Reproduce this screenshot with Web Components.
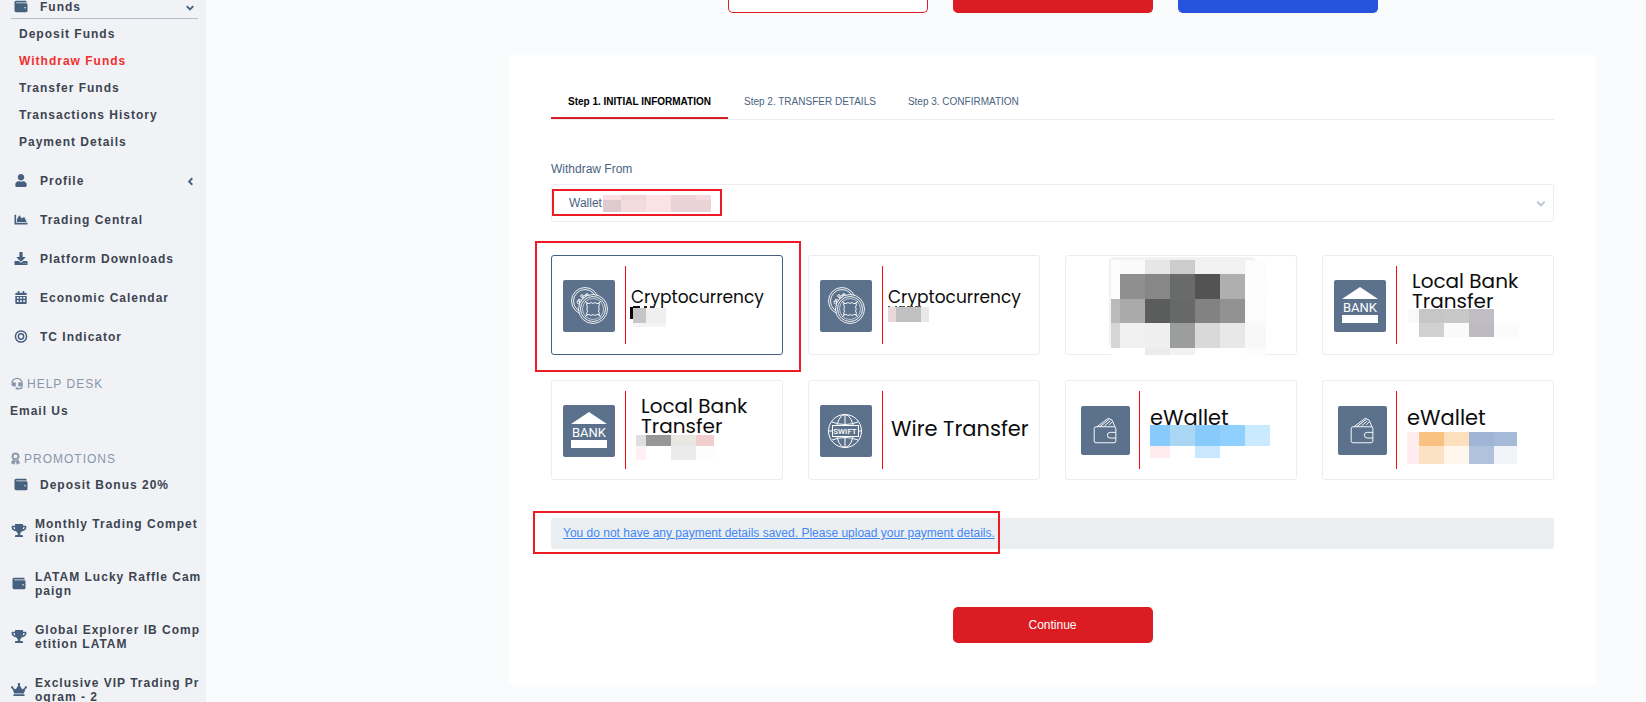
<!DOCTYPE html>
<html lang="en">
<head>
<meta charset="utf-8">
<title>Withdraw Funds</title>
<style>
  body { margin: 0; background: #fafbfd; font-family: "Liberation Sans", Arial, sans-serif; font-size: 12px; line-height: 14px; color: #4a6280; }
</style>
</head>
<body>
<portal-app></portal-app>
<script>
const ICONS = {
  wallet: ['0 0 512 512', '<path d="M461.2 128H80c-8.84 0-16-7.16-16-16s7.16-16 16-16h384c8.84 0 16-7.16 16-16 0-26.51-21.49-48-48-48H64C28.65 32 0 60.65 0 96v320c0 35.35 28.65 64 64 64h397.2c28.02 0 50.8-21.53 50.8-48V176c0-26.47-22.78-48-50.8-48zM416 336c-17.67 0-32-14.33-32-32s14.33-32 32-32 32 14.33 32 32-14.33 32-32 32z"/>'],
  user: ['0 0 448 512', '<path d="M224 256c70.7 0 128-57.3 128-128S294.7 0 224 0 96 57.3 96 128s57.3 128 128 128zm89.6 32h-16.7c-22.2 10.2-46.9 16-72.9 16s-50.6-5.8-72.9-16h-16.7C60.2 288 0 348.2 0 422.4V464c0 26.5 21.5 48 48 48h352c26.5 0 48-21.5 48-48v-41.6c0-74.2-60.2-134.4-134.4-134.4z"/>'],
  chart: ['0 0 512 512', '<path d="M500 384c6.6 0 12 5.4 12 12v40c0 6.6-5.4 12-12 12H12c-6.6 0-12-5.4-12-12V76c0-6.6 5.4-12 12-12h40c6.6 0 12 5.4 12 12v308h436zM372.7 159.5L288 216l-85.3-113.7c-5.1-6.8-15.5-6.3-19.9 1L96 248v104h384l-89.9-187.8c-3.2-6.5-11.4-8.7-17.4-4.7z"/>'],
  download: ['0 0 512 512', '<path d="M216 0h80c13.3 0 24 10.7 24 24v168h87.7c17.8 0 26.7 21.5 14.1 34.1L269.7 378.3c-7.5 7.5-19.8 7.5-27.3 0L90.1 226.1c-12.6-12.6-3.7-34.1 14.1-34.1H192V24c0-13.3 10.7-24 24-24zm296 376v112c0 13.3-10.7 24-24 24H24c-13.3 0-24-10.7-24-24V376c0-13.3 10.7-24 24-24h146.7l49 49c20.1 20.1 52.5 20.1 72.6 0l49-49H488c13.3 0 24 10.7 24 24zm-124 88c0-11-9-20-20-20s-20 9-20 20 9 20 20 20 20-9 20-20zm64 0c0-11-9-20-20-20s-20 9-20 20 9 20 20 20 20-9 20-20z"/>'],
  calendar: ['0 0 448 512', '<path fill-rule="evenodd" d="M48 64h48V12q0-12 12-12h40q12 0 12 12v52h128V12q0-12 12-12h40q12 0 12 12v52h48q48 0 48 48v36q0 12-12 12H12q-12 0-12-12v-36q0-48 48-48zM0 192h448v272q0 48-48 48H48q-48 0-48-48zM64 240v64h72v-64zM188 240v64h72v-64zM312 240v64h72v-64zM64 368v64h72v-64zM188 368v64h72v-64zM312 368v64h72v-64z"/>'],
  target: ['0 0 512 512', '<g fill="none" stroke="currentColor" stroke-width="58"><circle cx="256" cy="256" r="219"/><circle cx="256" cy="256" r="104"/></g>'],
  headset: ['0 0 512 512', '<path d="M56 250a200 200 0 0 1 400 0v120q0 84-84 84H270" fill="none" stroke="currentColor" stroke-width="50"/><path d="M144 208h36q28 0 28 28v108q0 28-28 28h-36C70 372 40 330 40 290s30-82 104-82zM368 208h-36q-28 0-28 28v108q0 28 28 28h36c74 0 104-42 104-82s-30-82-104-82zM230 416h64q32 0 32 40t-32 40h-64q-32 0-32-40t32-40z"/>'],
  award: ['0 0 384 512', '<circle cx="192" cy="172" r="122" fill="none" stroke="currentColor" stroke-width="70" stroke-dasharray="72 8"/><circle cx="192" cy="172" r="112" fill="none" stroke="currentColor" stroke-width="50"/><path d="M78 300 10 460l78-6 52 58 60-150 50 150 50-58 76 6-68-160-60 36H140z"/>'],
  trophy: ['0 0 576 512', '<path d="M552 64H448V24c0-13.3-10.7-24-24-24H152c-13.3 0-24 10.7-24 24v40H24C10.7 64 0 74.7 0 88v56c0 35.7 22.5 72.4 61.9 100.7 31.5 22.7 69.8 37.1 110 41.7C203.3 338.5 240 360 240 360v72h-48c-35.3 0-64 20.7-64 56v12c0 6.6 5.4 12 12 12h296c6.6 0 12-5.4 12-12v-12c0-35.3-28.7-56-64-56h-48v-72s36.7-21.5 68.1-73.6c40.3-4.6 78.6-19 110-41.7 39.3-28.3 61.9-65 61.9-100.7V88c0-13.3-10.7-24-24-24zM99.3 192.8C74.9 175.2 64 155.6 64 144v-16h64.2c1 32.6 5.8 61.2 12.8 86.2-15.1-5.2-29.2-12.4-41.7-21.4zM512 144c0 16.1-17.7 36.1-35.3 48.8-12.5 9-26.7 16.2-41.8 21.4 7-25 11.8-53.6 12.8-86.2H512v16z"/>'],
  crown: ['0 0 640 512', '<path d="M528 448H112c-8.8 0-16 7.2-16 16v32c0 8.8 7.2 16 16 16h416c8.8 0 16-7.2 16-16v-32c0-8.8-7.2-16-16-16zm64-320c-26.5 0-48 21.5-48 48 0 7.1 1.6 13.7 4.4 19.8L476 239.2c-15.4 9.2-35.3 4-44.2-11.6L350.3 85C361 76.2 368 63 368 48c0-26.5-21.5-48-48-48s-48 21.5-48 48c0 15 7 28.2 17.7 37l-81.5 142.6c-8.9 15.6-28.9 20.8-44.2 11.6l-72.3-43.4c2.7-6 4.4-12.7 4.4-19.8 0-26.5-21.5-48-48-48S0 149.5 0 176s21.5 48 48 48c2.6 0 5.2-.4 7.7-.8L128 416h384l72.3-192.8c2.5.4 5.1.8 7.7.8 26.5 0 48-21.5 48-48s-21.5-48-48-48z"/>'],
  caret: ['0 0 14 14', '<path d="M3 5l4 4 4-4" fill="none" stroke="currentColor" stroke-width="2"/>'],
  down: ['0 0 14 14', '<path d="M3.5 5.5 7 9l3.500-3.500" fill="none" stroke="currentColor" stroke-width="2"/>'],
  left: ['0 0 14 14', '<path d="M9.500 3.500 6 7l3.500 3.500" fill="none" stroke="currentColor" stroke-width="2"/>']
};

const TILES = {
  crypto: `<g fill="none" stroke="#fff" stroke-width=".9">
    <circle cx="22" cy="21" r="13.500"/><circle cx="22" cy="21" r="11.500"/>
    <path d="M14 22l2-3 3 2 1-4 4 1M17 25l-1-5M21 16l3-2M20 19l5-4"/><circle cx="15.500" cy="22.500" r="1.300"/><circle cx="19" cy="16" r="1.300"/><circle cx="24" cy="15" r="1.300"/>
    <circle cx="30" cy="29" r="14.500" fill="#5c728c"/><circle cx="30" cy="29" r="12.500"/><circle cx="30" cy="29" r="10.500" stroke-width=".6"/>
    <path d="M24 23q2 1.500 4-.5 2 2 4 0 2 2 4 .5 1 2-.5 4 1.500 2 0 4 1.500 2 .5 4-2-1.500-4 .5-2-2-4 0-2-2-4-.5-1-2 .5-4-1.500-2 0-4-1.500-2-.5-4z"/><path d="M22 21l3 3M38 21l-3 3M22 37l3-3M38 37l-3-3"/></g>`,
  bank: `<path d="M8 19 26 7l18 12zM8 35h36v8H8z" fill="#fff"/><text x="26" y="32" text-anchor="middle" font-family="Roboto, sans-serif" font-size="13" fill="#fff">BANK</text>`,
  swift: `<g fill="none" stroke="#fff" stroke-width="1"><circle cx="25" cy="26" r="16.500"/><ellipse cx="25" cy="26" rx="8.500" ry="16.500"/><path d="M25 9.500v33M8.500 26h33M12 17q13 5 26 0M12 35q13-5 26 0"/><rect x="12.500" y="20.500" width="26" height="11" fill="#5c728c"/></g><text x="25" y="29" text-anchor="middle" font-family="Roboto, sans-serif" font-size="8" font-weight="500" fill="#fff">SWIFT</text>`,
  wallet: `<g fill="none" stroke="#fff" stroke-width="1"><path d="M16 22h19q2 0 2 2v4h-6q-3 0-3 3t3 3h6v3q0 2-2 2H16q-2 0-2-2V24q0-2 2-2zM37 28v6M17 22l12-9 4 2 3 7M20 22l10-8M25 21l6-5M30 20l3-3"/></g>`
};

function define(name, html, setup) {
  const template = document.createElement('template');
  template.innerHTML = html;
  customElements.define(name, class extends HTMLElement {
    connectedCallback() {
      if (this.shadowRoot) return;
      this.attachShadow({ mode: 'open' }).append(template.content.cloneNode(true));
      if (setup) setup(this, this.shadowRoot);
    }
  });
}

define('ui-icon', `<style>:host{display:flex;align-items:center;justify-content:center;flex:none;width:16px;height:14px}svg{display:block;height:13px;width:100%;fill:currentColor}</style><svg aria-hidden="true"></svg>`, (el, root) => {
  const [box, body] = ICONS[el.getAttribute('name')];
  const svg = root.querySelector('svg');
  svg.setAttribute('viewBox', box);
  svg.innerHTML = body;
});

/* Pixelated cover over private details; cells are "x y width height colour". */
define('privacy-mask', `<style>:host{display:block;position:absolute;inset:-1px;pointer-events:none}svg{display:block;overflow:visible}</style><svg width="232" height="100" shape-rendering="crispEdges" aria-hidden="true"></svg>`, (el, root) => {
  root.querySelector('svg').innerHTML = el.getAttribute('cells').split(',').map(cell => {
    const [x, y, w, h, c] = cell.trim().split(' ');
    return `<rect x="${x}" y="${y}" width="${w}" height="${h}" fill="#${c}"/>`;
  }).join('');
});

define('focus-frame', `<style>:host{display:block;position:absolute;box-sizing:border-box;border:2px solid #ed1c24;pointer-events:none;z-index:2}</style>`);

define('nav-item', `<style>
  :host{display:block}
  a{display:flex;align-items:center;color:#3c4450;font-weight:bold;letter-spacing:1px;text-decoration:none;white-space:nowrap;padding:0 8px 0 13px}
  ui-icon{color:#46607f;margin:-2px 11px 0 0}
  .more{margin:0 0 0 auto}
  :host([wide]) a{padding-left:11px}
  :host([wide]) ui-icon{margin-right:8px}
</style><a href="#"><slot></slot></a>`, (el, root) => {
  const a = root.querySelector('a');
  a.insertAdjacentHTML('afterbegin', `<ui-icon name="${el.getAttribute('icon')}"></ui-icon>`);
  if (el.hasAttribute('more')) a.insertAdjacentHTML('beforeend', `<ui-icon class="more" name="${el.getAttribute('more')}"></ui-icon>`);
});

define('nav-heading', `<style>:host{display:flex;align-items:center;gap:2px;color:#8896a9;letter-spacing:1px;padding-left:9px}ui-icon{margin-top:-1px}ui-icon[name=award]{width:13px}</style><slot></slot>`, (el, root) => {
  root.querySelector('slot').insertAdjacentHTML('beforebegin', `<ui-icon name="${el.getAttribute('icon')}"></ui-icon>`);
});

define('side-nav', `<style>
  :host{display:block;box-sizing:border-box;width:206px;height:100vh;overflow:hidden;background:#f0f2f6}
  .group{display:flex;flex-direction:column;gap:25px}
  .open{border-bottom:1px solid #b3bfce;margin:0 8px 0 11px;padding-bottom:4px}
  .open nav-item{margin:0 -8px 0 -11px}
  .sub{display:flex;flex-direction:column;gap:13px;padding:8px 19px 25px}
  .sub a,.mail{color:#3c4450;font-weight:bold;letter-spacing:1px;text-decoration:none}
  .sub a[aria-current]{color:#f0302c}
  .help{margin-top:33px}
  .mail{display:block;margin:13px 10px 34px}
  .promo{margin-bottom:12px}
</style>
<nav>
  <div class="open"><nav-item icon="wallet" more="down">Funds</nav-item></div>
  <div class="sub"><a href="#">Deposit Funds</a><a href="#" aria-current="page">Withdraw Funds</a><a href="#">Transfer Funds</a><a href="#">Transactions History</a><a href="#">Payment Details</a></div>
  <div class="group">
    <nav-item icon="user" more="left">Profile</nav-item>
    <nav-item icon="chart">Trading Central</nav-item>
    <nav-item icon="download">Platform Downloads</nav-item>
    <nav-item icon="calendar">Economic Calendar</nav-item>
    <nav-item icon="target">TC Indicator</nav-item>
  </div>
  <nav-heading class="help" icon="headset">HELP DESK</nav-heading>
  <a class="mail" href="#">Email Us</a>
  <nav-heading class="promo" icon="award">PROMOTIONS</nav-heading>
  <div class="group">
    <nav-item icon="wallet">Deposit Bonus 20%</nav-item>
    <nav-item wide icon="trophy"><span>Monthly Trading Compet<br>ition</span></nav-item>
    <nav-item wide icon="wallet"><span>LATAM Lucky Raffle Cam<br>paign</span></nav-item>
    <nav-item wide icon="trophy"><span>Global Explorer IB Comp<br>etition LATAM</span></nav-item>
    <nav-item wide icon="crown"><span>Exclusive VIP Trading Pr<br>ogram - 2</span></nav-item>
  </div>
</nav>`);

define('top-actions', `<style>
  :host{display:flex;justify-content:center;gap:25px}
  button{box-sizing:border-box;width:200px;height:13px;padding:0;border:1px solid #db1c22;border-top:0;border-radius:0 0 5px 5px;background:#db1c22}
  .outline{background:#fff}
  .blue{background:#2754df;border-color:#2754df}
</style><button class="outline" aria-label="First action"></button><button aria-label="Second action"></button><button class="blue" aria-label="Third action"></button>`);

define('step-tabs', `<style>
  :host{display:flex;font-size:10px;line-height:10px;border-bottom:1px solid #e9edf1}
  a{padding:0 17px 10px;border-bottom:2px solid transparent;color:#4a6280;text-decoration:none;white-space:nowrap}
  a + a{padding:0 16px 10px}
  a[aria-current]{color:#000;font-weight:bold;border-color:#db1c22}
</style><a href="#" aria-current="step">Step 1. INITIAL INFORMATION</a><a href="#">Step 2. TRANSFER DETAILS</a><a href="#">Step 3. CONFIRMATION</a>`);

define('wallet-select', `<style>
  :host{display:block}
  label{display:block;margin-bottom:8px}
  .box{position:relative;color:#b9c4d2}
  select{appearance:none;display:block;box-sizing:border-box;width:100%;height:38px;padding:0 40px 0 17px;border:1px solid #e9edf4;border-radius:3px;background:#fff;font:inherit;color:#4a6280}
  ui-icon{position:absolute;right:5px;top:12px}
  focus-frame{left:1px;top:5px;width:170px;height:27px}
</style>
<label for="source">Withdraw From</label>
<div class="box"><select id="source"><option>Wallet</option></select><ui-icon name="caret"></ui-icon>
<privacy-mask cells="53 12 18 5 fbdfe1,71 12 25 5 eed6da,96 12 25 5 fbe2e3,121 12 25 5 ecd4d8,146 12 15 5 f6dadf,53 17 18 12 dfcbcf,71 17 25 12 f3dbde,96 17 25 12 fbe2e3,121 17 40 12 e9d3d7"></privacy-mask>
<focus-frame></focus-frame></div>`);

define('pay-method', `<style>
  :host{display:block;position:relative;box-sizing:border-box;height:100px;border:1px solid #e9edf4;border-radius:3px;background:#fff;--text:20px;--top:15px;--left:15px}
  :host([checked]){border-color:#46607f}
  label{display:flex;align-items:center;height:100%;padding-left:11px;box-sizing:border-box;cursor:pointer}
  input{position:absolute;opacity:0;margin:0;inset:0;width:100%;height:100%}
  .tile{flex:none;width:52px;height:52px;border-radius:2px;background:#5c728c;margin-top:2px}
  .rule{flex:none;width:1px;height:78px;background:#f8090f;margin-left:10px}
  .name{align-self:flex-start;padding:var(--top) 0 0 var(--left);font:var(--text)/20px Poppins,Inter,sans-serif;color:#0c0c0c;white-space:nowrap}
  :host([kind=crypto]){--text:17px;--top:31px;--left:5px}
  :host([kind=swift]){--text:21px;--top:38px;--left:8px}
  :host([kind=wallet]){--text:21px;--top:27px;--left:10px}
  :host([kind=wallet]) .tile{width:49px;height:49px;margin:0 0 0 4px}
  :host([kind=wallet]) .rule{margin-left:9px}
  :host([kind=hidden]) .tile,:host([kind=hidden]) .rule{display:none}
</style>
<label><input type="radio"><svg class="tile" viewBox="0 0 52 52" aria-hidden="true"></svg><span class="rule"></span><span class="name"><slot></slot></span></label><slot name="over"></slot>`, (el, root) => {
  const kind = el.getAttribute('kind');
  root.querySelector('svg').innerHTML = TILES[kind] || '';
  const input = root.querySelector('input');
  input.checked = el.hasAttribute('checked');
  if (kind === 'hidden') input.setAttribute('aria-label', 'Payment method');
  input.addEventListener('change', () => {
    for (const other of el.getRootNode().querySelectorAll('pay-method')) {
      other.toggleAttribute('checked', other === el);
      other.shadowRoot.querySelector('input').checked = other === el;
    }
  });
});

define('method-grid', `<style>
  :host{display:grid;grid-template-columns:repeat(4,1fr);gap:25px}
  focus-frame{left:-17px;top:-15px;width:266px;height:131px}
</style>
<pay-method kind="crypto" checked>Cryptocurrency<privacy-mask slot="over" cells="79 52 3 12 050505,82 51 7 2 111111,93 51 3 2 222222,99 51 3 2 333333,82 53 13 15 c6c6c6,95 53 20 15 efefef,82 68 33 4 f4f4f4"></privacy-mask><focus-frame slot="over"></focus-frame></pay-method>
<pay-method kind="crypto">Cryptocurrency<privacy-mask slot="over" cells="80 51 2 1 555555,87 51 2 1 555555,91 51 6 1 555555,99 51 6 1 555555,107 51 6 1 555555,80 52 8 15 ead7dc,88 52 25 15 c0c0c0,113 52 8 15 e8e8e8"></privacy-mask></pay-method>
<pay-method kind="hidden"><privacy-mask slot="over" cells="48 2 139 1 f2f2f2,45 3 145 2 f2f2f2,44 5 2 85 f2f2f2,46 5 9 14 fdfdfd,55 5 25 14 fafafa,80 5 25 14 e6e6e6,105 5 25 14 cccccc,130 5 50 14 f2f2f2,180 5 21 14 fcfcfc,46 19 9 25 fdfdfd,55 19 25 25 8f8f8f,80 19 25 25 878787,105 19 25 25 696b6a,130 19 25 25 535353,155 19 25 25 afafaf,180 19 21 25 fdfdfd,46 44 9 24 bababa,55 44 25 24 aaaaaa,80 44 25 24 5b5d5c,105 44 25 24 676968,130 44 25 24 828282,155 44 25 24 929292,180 44 21 24 fcfcfc,46 68 9 25 d5d5d5,55 68 25 25 f1f1f1,80 68 25 25 efefef,105 68 25 25 9c9e9d,130 68 25 25 d9d9d9,155 68 25 25 e8e8e8,180 68 21 25 f8f8f8,46 93 34 7 ffffff,80 93 25 7 ebebeb,105 93 25 7 f2f2f2,130 93 50 7 ffffff,180 93 21 7 fcfcfc"></privacy-mask></pay-method>
<pay-method kind="bank">Local Bank<br>Transfer<privacy-mask slot="over" cells="86 54 11 14 fbf9f8,97 54 25 14 c6c6c6,122 54 25 14 c8c8c8,147 54 25 14 c0bdc4,97 68 25 14 d1d1d1,122 68 25 14 f8fbfa,147 68 25 14 bdbac1,172 68 25 14 fbfbfb"></privacy-mask></pay-method>
<pay-method kind="bank">Local Bank<br>Transfer<privacy-mask slot="over" cells="85 55 10 11 dfdfdf,95 55 25 11 979797,120 55 25 11 e8e7e2,145 55 18 11 f1cdcd,85 66 10 14 fff1f2,120 66 25 14 ebebeb,145 66 18 14 fdfdfd"></privacy-mask></pay-method>
<pay-method kind="swift">Wire Transfer</pay-method>
<pay-method kind="wallet">eWallet<privacy-mask slot="over" cells="85 45 20 21 86cbfc,105 45 25 21 a9d6f3,130 45 25 21 86cbfc,155 45 25 21 90d0ff,180 45 25 21 caeaff,85 66 20 12 ffecee,130 66 25 12 c9e8ff"></privacy-mask></pay-method>
<pay-method kind="wallet">eWallet<privacy-mask slot="over" cells="85 52 12 32 ffecee,97 52 25 14 f9c280,122 52 25 14 fcdfbd,147 52 25 14 a0b5d5,172 52 23 14 a5b9d9,97 66 25 18 fbe2c5,122 66 25 18 fff6ed,147 66 25 18 b0c2dd,172 66 23 18 f1f5fa"></privacy-mask></pay-method>`);

define('notice-bar', `<style>
  :host{display:block;position:relative;padding:8px 12px 9px;border-radius:3px;background:#eaeef1}
  a{color:#4287f5;text-decoration:underline}
  focus-frame{left:-18px;top:-7px;width:467px;height:43px}
</style><a href="#"><slot></slot></a><focus-frame></focus-frame>`);

define('withdraw-card', `<style>
  :host{display:flex;flex-direction:column;background:#fff;border-radius:4px;padding:42px}
  wallet-select{margin:42px 0 33px}
  notice-bar{margin:38px 0 58px}
  button{align-self:center;width:200px;height:36px;border:0;border-radius:5px;background:#db1c22;color:#fff;font:inherit}
</style>
<step-tabs></step-tabs>
<wallet-select></wallet-select>
<method-grid></method-grid>
<notice-bar>You do not have any payment details saved. Please upload your payment details.</notice-bar>
<button>Continue</button>`);

define('portal-app', `<style>
  :host{display:flex;align-items:flex-start}
  main{flex:1;min-width:0;padding:0 50px 17px 303px}
  withdraw-card{margin-top:42px}
</style><side-nav></side-nav><main><top-actions></top-actions><withdraw-card></withdraw-card></main>`);
</script>
</body>
</html>
